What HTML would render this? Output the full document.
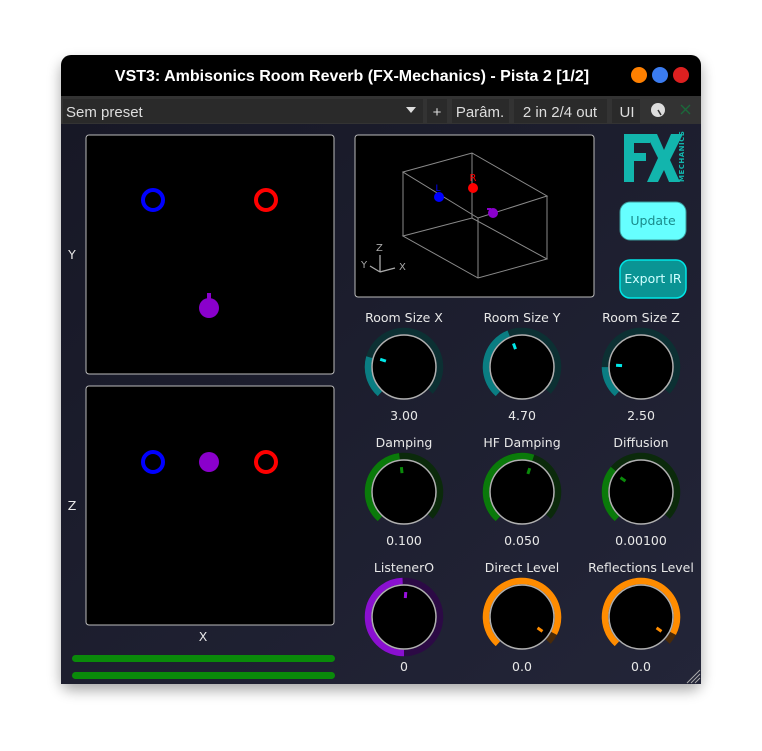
<!DOCTYPE html>
<html><head><meta charset="utf-8"><style>
html,body{margin:0;padding:0;background:#fff;width:762px;height:751px;overflow:hidden}
svg{position:absolute;left:0;top:0}
.t{font-family:"DejaVu Sans",sans-serif;font-size:12.5px;fill:#e8e8e8;text-anchor:middle}
.tb{font-family:"Liberation Sans",sans-serif;font-size:15px;fill:#ddd}
</style></head><body>
<svg width="762" height="751" viewBox="0 0 762 751">
<defs>
<filter id="sh" x="-10%" y="-10%" width="120%" height="120%"><feGaussianBlur stdDeviation="7"/></filter>
<linearGradient id="bg" x1="0" y1="0" x2="1" y2="1"><stop offset="0" stop-color="#171826"/><stop offset="1" stop-color="#232538"/></linearGradient>
<g id="ring"><circle r="32" fill="#000" stroke="#b0b0b0" stroke-width="1.5"/></g>
</defs>
<rect x="61" y="62" width="640" height="628" rx="10" fill="#000" opacity="0.35" filter="url(#sh)"/>
<path d="M71 55 H691 A10 10 0 0 1 701 65 V684 H61 V65 A10 10 0 0 1 71 55Z" fill="#000"/>
<rect x="61" y="124" width="640" height="560" fill="url(#bg)"/>
<text x="352" y="81" font-family="Liberation Sans,sans-serif" font-weight="bold" font-size="16" fill="#fff" text-anchor="middle">VST3: Ambisonics Room Reverb (FX-Mechanics) - Pista 2 [1/2]</text>
<circle cx="639" cy="75" r="8" fill="#ff8000"/><circle cx="660" cy="75" r="8" fill="#3b7cf0"/><circle cx="681" cy="75" r="8" fill="#dd2020"/>
<rect x="61" y="96" width="640" height="28" fill="#333"/>
<rect x="63" y="99" width="360" height="24" fill="#2a2a2a"/>
<text x="66" y="117" class="tb">Sem preset</text>
<path d="M406 107 h10 l-5 6z" fill="#ddd"/>
<rect x="427" y="99" width="20" height="24" fill="#2a2a2a"/><text x="437" y="117" class="tb" text-anchor="middle">+</text>
<rect x="452" y="99" width="57" height="24" fill="#2a2a2a"/><text x="480" y="117" class="tb" text-anchor="middle">Parâm.</text>
<rect x="514" y="99" width="93" height="24" fill="#2a2a2a"/><text x="560" y="117" class="tb" text-anchor="middle">2 in 2/4 out</text>
<rect x="612" y="99" width="28" height="24" fill="#2a2a2a"/><text x="627" y="117" class="tb" text-anchor="middle">UI</text>
<circle cx="658" cy="110" r="7" fill="#ddd"/><line x1="658" y1="110" x2="661" y2="115" stroke="#333" stroke-width="1.5"/>
<path d="M681 105 l9 9 M690 105 l-9 9" stroke="#1a6a3a" stroke-width="1.3"/>
<rect x="86" y="135" width="248" height="239" rx="3" fill="#000" stroke="#bbb" stroke-width="1"/>
<rect x="86" y="386" width="248" height="239" rx="3" fill="#000" stroke="#bbb" stroke-width="1"/>
<text x="72" y="259" class="t">Y</text><text x="72" y="510" class="t">Z</text><text x="203" y="641" class="t">X</text>
<circle cx="153" cy="200" r="10" fill="none" stroke="#0000ff" stroke-width="4"/>
<circle cx="266" cy="200" r="10" fill="none" stroke="#ff0000" stroke-width="4"/>
<rect x="207" y="293" width="4" height="8" fill="#8a00cc"/><circle cx="209" cy="308" r="10" fill="#8a00cc"/>
<circle cx="153" cy="462" r="10" fill="none" stroke="#0000ff" stroke-width="4"/>
<circle cx="266" cy="462" r="10" fill="none" stroke="#ff0000" stroke-width="4"/>
<circle cx="209" cy="462" r="10" fill="#8a00cc"/>
<rect x="72" y="655" width="263" height="7" rx="3.5" fill="#0a8a0a"/>
<rect x="72" y="672" width="263" height="7" rx="3.5" fill="#0a8a0a"/>
<rect x="355" y="135" width="239" height="162" rx="3" fill="#000" stroke="#bbb" stroke-width="1"/>
<g stroke="#8a8a8a" stroke-width="1" fill="none">
<path d="M403 172 L472 153 L547 196 L478 218 Z M403 236 L472 218 L547 259 L478 278 Z M403 172 V236 M472 153 V218 M547 196 V259 M478 218 V278"/>
</g>
<circle cx="439" cy="197" r="5" fill="#0000ff"/><text x="438" y="191" font-family="DejaVu Sans,sans-serif" font-size="9" fill="#0000ff" text-anchor="middle">L</text>
<circle cx="473" cy="188" r="5" fill="#ff0000"/><text x="473" y="181" font-family="DejaVu Sans,sans-serif" font-size="10" fill="#ff0000" text-anchor="middle">R</text>
<circle cx="493" cy="213" r="5" fill="#8a00cc"/><rect x="487" y="208" width="4" height="2" fill="#8a00cc"/>
<g stroke="#aaa" stroke-width="1.3"><path d="M380 272 V255 M380 272 L395 268 M380 272 L370 266"/></g>
<g font-family="DejaVu Sans,sans-serif" font-size="10" fill="#aaa"><text x="376" y="251">Z</text><text x="399" y="270">X</text><text x="361" y="268">Y</text></g>
<g fill="#12b5ad">
<path d="M624 134 H650 V143 H634 V153 H646 V161 H634 V182 H624Z"/>
<path d="M646 134 H657 L664 150 L671 134 H683 L670 160 L680 182 H669 L664 170 L658 182 H647 L658 158Z"/>
</g>
<text transform="translate(684,182) rotate(-90)" font-family="DejaVu Sans,sans-serif" font-size="7" font-weight="bold" fill="#12b5ad" letter-spacing="0.5">MECHANICS</text>
<rect x="620" y="202" width="66" height="38" rx="10" fill="#66ffff" stroke="#3a9a9a"/>
<text x="653" y="225" font-family="DejaVu Sans,sans-serif" font-size="12.5" fill="#1a8a8a" text-anchor="middle">Update</text>
<rect x="620" y="260" width="66" height="38" rx="10" fill="#0a9494" stroke="#00e6e6" stroke-width="1.5"/>
<text x="653" y="283" font-family="DejaVu Sans,sans-serif" font-size="12.5" fill="#cfffff" text-anchor="middle">Export IR</text>
<g stroke-width="6.5" fill="none">
<g transform="translate(404,367)"><circle r="36" stroke="#0c3033" stroke-dasharray="170 300" transform="rotate(132)"/><circle r="36" stroke="#0a7d82" stroke-dasharray="40 300" transform="rotate(132)"/><use href="#ring"/><line y1="-19" y2="-25" stroke="#00e8e8" stroke-width="3" transform="rotate(-72)"/></g>
<g transform="translate(522,367)"><circle r="36" stroke="#0c3033" stroke-dasharray="170 300" transform="rotate(132)"/><circle r="36" stroke="#0a7d82" stroke-dasharray="73 300" transform="rotate(132)"/><use href="#ring"/><line y1="-19" y2="-25" stroke="#00e8e8" stroke-width="3" transform="rotate(-20)"/></g>
<g transform="translate(641,367)"><circle r="36" stroke="#0c3033" stroke-dasharray="170 300" transform="rotate(132)"/><circle r="36" stroke="#0a7d82" stroke-dasharray="30 300" transform="rotate(132)"/><use href="#ring"/><line y1="-19" y2="-25" stroke="#00e8e8" stroke-width="3" transform="rotate(-86)"/></g>
<g transform="translate(404,492)"><circle r="36" stroke="#0b2a0b" stroke-dasharray="170 300" transform="rotate(132)"/><circle r="36" stroke="#0a7a0a" stroke-dasharray="82 300" transform="rotate(132)"/><use href="#ring"/><line y1="-19" y2="-25" stroke="#0a8a0a" stroke-width="3" transform="rotate(-6)"/></g>
<g transform="translate(522,492)"><circle r="36" stroke="#0b2a0b" stroke-dasharray="170 300" transform="rotate(132)"/><circle r="36" stroke="#0a7a0a" stroke-dasharray="98 300" transform="rotate(132)"/><use href="#ring"/><line y1="-19" y2="-25" stroke="#0a8a0a" stroke-width="3" transform="rotate(18)"/></g>
<g transform="translate(641,492)"><circle r="36" stroke="#0b2a0b" stroke-dasharray="170 300" transform="rotate(132)"/><circle r="36" stroke="#0a7a0a" stroke-dasharray="55 300" transform="rotate(132)"/><use href="#ring"/><line y1="-19" y2="-25" stroke="#0a8a0a" stroke-width="3" transform="rotate(-55)"/></g>
<g transform="translate(404,617)"><circle r="36" stroke="#2c0a45"/><circle r="36" stroke="#8a10d0" stroke-dasharray="111.5 300" transform="rotate(90)"/><use href="#ring"/><line y1="-19" y2="-25" stroke="#9a10e0" stroke-width="3" transform="rotate(4)"/></g>
<g transform="translate(522,617)"><circle r="36" stroke="#4a2a08" stroke-dasharray="170 300" transform="rotate(132)"/><circle r="36" stroke="#ff8c00" stroke-dasharray="160 300" transform="rotate(132)"/><use href="#ring"/><line y1="-19" y2="-25" stroke="#ff8c00" stroke-width="3" transform="rotate(125)"/></g>
<g transform="translate(641,617)"><circle r="36" stroke="#4a2a08" stroke-dasharray="170 300" transform="rotate(132)"/><circle r="36" stroke="#ff8c00" stroke-dasharray="160 300" transform="rotate(132)"/><use href="#ring"/><line y1="-19" y2="-25" stroke="#ff8c00" stroke-width="3" transform="rotate(125)"/></g>
</g>
<text x="404" y="322" class="t">Room Size X</text><text x="522" y="322" class="t">Room Size Y</text><text x="641" y="322" class="t">Room Size Z</text>
<text x="404" y="420" class="t">3.00</text><text x="522" y="420" class="t">4.70</text><text x="641" y="420" class="t">2.50</text>
<text x="404" y="447" class="t">Damping</text><text x="522" y="447" class="t">HF Damping</text><text x="641" y="447" class="t">Diffusion</text>
<text x="404" y="545" class="t">0.100</text><text x="522" y="545" class="t">0.050</text><text x="641" y="545" class="t">0.00100</text>
<text x="404" y="572" class="t">ListenerO</text><text x="522" y="572" class="t">Direct Level</text><text x="641" y="572" class="t">Reflections Level</text>
<text x="404" y="671" class="t">0</text><text x="522" y="671" class="t">0.0</text><text x="641" y="671" class="t">0.0</text>
<g stroke="#aaa" stroke-width="1"><path d="M700 670 L687 683 M700 674 L691 683 M700 678 L695 683"/></g>
</svg>
</body></html>
